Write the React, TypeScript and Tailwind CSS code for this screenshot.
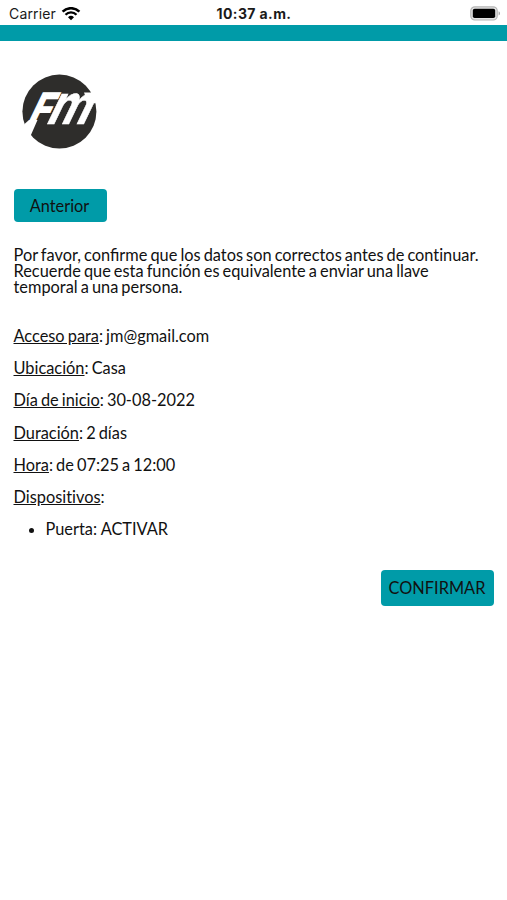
import React, { ReactNode } from 'react';

type Detail = {
  label: string;
  value?: string;
}

const details: Detail[] = [
  { label: 'Acceso para', value: 'jm@gmail.com' },
  { label: 'Ubicación', value: 'Casa' },
  { label: 'Día de inicio', value: '30-08-2022' },
  { label: 'Duración', value: '2 días' },
  { label: 'Hora', value: 'de 07:25 a 12:00' },
  { label: 'Dispositivos' },
];

const devices = ['Puerta: ACTIVAR'];

function WifiIcon(): ReactNode {
  return (
    <svg className="ml-[5px] h-[14px] w-[20px]" viewBox="0 0 20 14" fill="none" stroke="#000">
      <path d="M1.6 4.6a12 12 0 0 1 16.8 0" strokeWidth="2.5" />
      <path d="M4.5 7.7a7.8 7.8 0 0 1 11 0" strokeWidth="2.3" />
      <path d="M10 13.3 7 10.3a4.3 4.3 0 0 1 6 0z" fill="#000" stroke="none" />
    </svg>
  );
}

function BatteryIcon(): ReactNode {
  return (
    <svg className="h-[15px] w-[31px]" viewBox="0 0 31 15">
      <rect x="0.8" y="0.8" width="26.4" height="13.2" rx="4" fill="#e4e4e4" stroke="#b5b5b5" strokeWidth="1.2" />
      <rect x="2.8" y="2.8" width="22.4" height="9.2" rx="1.8" fill="#000" />
      <path d="M28.6 5.2v4.4a2.4 2.4 0 0 0 0-4.4z" fill="#a9a9a9" />
    </svg>
  );
}

function StatusBar(): ReactNode {
  return (
    <div className="grid h-[25px] grid-cols-3 items-center pl-[9px] pr-[6px] pt-[2px] font-['Inter',sans-serif] text-[14px] leading-none text-[#1a1a1a] [word-spacing:0px]">
      <div className="flex items-center">
        <span className="tracking-[0.15px]">Carrier</span>
        <WifiIcon />
      </div>
      <span className="-ml-[2px] text-center font-bold tracking-[0.4px]">10:37 a.m.</span>
      <div className="flex justify-end">
        <BatteryIcon />
      </div>
    </div>
  );
}

function Logo(): ReactNode {
  return (
    <svg className="ml-[8px] h-[76px] w-[76px] overflow-visible" viewBox="0 0 76 76">
      <circle cx="37.4" cy="37.6" r="37" fill="#2e2d2b" />
      <g fill="#fff" stroke="#fff" fontFamily="Inter, sans-serif">
        <text transform="matrix(0.84 0 -0.48 1 4 49.5)" fontSize="42.5" fontWeight="700" strokeWidth="1.6">F</text>
        <text transform="matrix(0.84 0 -0.48 1 22.5 49.5)" fontSize="55" fontWeight="700" strokeWidth="0.6">m</text>
      </g>
      <path d="M7 46h8.5L8.5 62 1 59l1.500-9z" fill="#fff" />
      <path d="M62 18.5h16v4l-5 7-8-3z" fill="#fff" />
    </svg>
  );
}

export default function App(): ReactNode {
  return (
    <div className="min-h-[900px] bg-white font-['Lato',sans-serif] text-[16.35px] leading-[16.2px] text-[#111] [font-variant-ligatures:none] [word-spacing:-1.1px]">
      <StatusBar />
      <div className="h-[16px] bg-[#009ba8]" />
      <main className="flex flex-col px-[13.5px] pt-[33px]">
        <Logo />
        <button className="mt-[39px] h-[33px] w-[93px] rounded-[4px] bg-[#009ba8] pr-px pt-px">
          Anterior
        </button>
        <p className="mt-[25px]">
          Por favor, <span className="[font-variant-ligatures:normal]">confirme</span> que los datos son correctos antes de continuar.
          {' '}
          Recuerde que esta función es equivalente a enviar una llave temporal a una persona.
        </p>
        <div className="mt-[32.2px] flex flex-col gap-[16.1px]">
          {details.map(({ label, value }) => (
            <p key={label}>
              <span className="underline">{label}</span>
              {value ? `: ${value}` : ':'}
            </p>
          ))}
          <ul className="-mt-[0.4px] list-disc pl-[32px]">
            {devices.map((device) => (
              <li key={device} className="[word-spacing:0px]">{device}</li>
            ))}
          </ul>
        </div>
        <button className="mt-[32.2px] h-[36px] w-[113px] self-end rounded-[4px] bg-[#009ba8] pt-[2px]">
          CONFIRMAR
        </button>
      </main>
    </div>
  );
}
